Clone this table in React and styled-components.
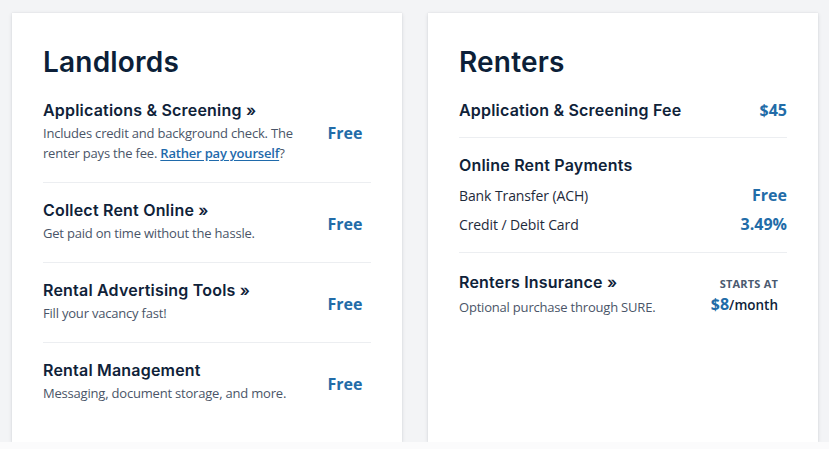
import React from "react";
import styled, { createGlobalStyle } from "styled-components";

const Global = createGlobalStyle`
  html, body { margin: 0; padding: 0; }
  body {
    background: #fbfbfc;
    font-family: "Open Sans", "Liberation Sans", sans-serif;
    -webkit-font-smoothing: antialiased;
  }
`;

const Page = styled.div`
  width: 829px;
  height: 442px;
  box-sizing: border-box;
  padding: 13px 10px 0 12px;
  display: flex;
  gap: 26px;
  align-items: stretch;
  background: #f3f4f6;
`;

const Card = styled.section`
  width: 390px;
  flex: none;
  box-sizing: border-box;
  background: #ffffff;
  padding: 31px 31px 19px 31px;
  box-shadow: 0 1px 4px rgba(20, 30, 50, 0.12), 0 0 1px rgba(20, 30, 50, 0.1);
`;

const Heading = styled.h2`
  margin: 0 0 19px 0;
  font-family: Inter, "Noto Sans", sans-serif;
  font-weight: 600;
  font-size: 28px;
  line-height: 36px;
  letter-spacing: 0.2px;
  color: #0c1f38;
`;

const Item = styled.div`
  display: flex;
  align-items: ${(p) => (p.$top ? "flex-start" : "center")};
  justify-content: space-between;
  padding: ${(p) => p.$pad || "16px 0 19px 0"};
  border-bottom: ${(p) => (p.$last ? "none" : "1px solid #eceef1")};
  &:first-of-type { padding-top: 0; }
`;

const ItemBody = styled.div`
  flex: 1;
  min-width: 0;
`;

const Title = styled.div`
  font-family: Inter, "Noto Sans", sans-serif;
  font-weight: 600;
  font-size: 16px;
  line-height: 22px;
  letter-spacing: 0.2px;
  color: #0f2239;
`;

const Desc = styled.div`
  margin-top: ${(p) => p.$mt || "2px"};
  font-size: 13px;
  line-height: 20px;
  letter-spacing: -0.2px;
  color: #4a5568;
  max-width: 260px;
`;

const Link = styled.a`
  color: #1f6aab;
  font-weight: 600;
  text-decoration: underline;
  text-underline-offset: 2px;
`;

const Price = styled.div`
  flex: none;
  width: ${(p) => p.$w || "auto"};
  text-align: ${(p) => p.$align || "right"};
  font-weight: 700;
  font-size: 16px;
  line-height: 22px;
  color: #226ca8;
  margin-top: ${(p) => p.$mt || "0"};
`;

const SubRow = styled.div`
  display: flex;
  justify-content: space-between;
  align-items: center;
  margin-top: ${(p) => p.$mt || "9px"};
  height: 20px;
`;

const SubLabel = styled.span`
  font-size: 14px;
  letter-spacing: -0.1px;
  color: #1e2a3b;
`;

const Starts = styled.div`
  flex: none;
  padding-right: 9px;
  padding-top: 6px;
  text-align: right;
`;

const StartsLabel = styled.div`
  font-size: 11px;
  font-weight: 700;
  letter-spacing: 0.2px;
  line-height: 14px;
  color: #4a5a70;
`;

const StartsPrice = styled.div`
  margin-top: 2px;
  line-height: 22px;
  color: #0f2239;
  font-size: 13.5px;
  font-weight: 600;
  b {
    font-size: 16px;
    font-weight: 700;
    color: #226ca8;
  }
`;

const landlords = [
  {
    title: "Applications & Screening »",
    desc: (
      <>
        Includes credit and background check. The renter pays the fee.{" "}
        <Link href="#">Rather pay yourself</Link>?
      </>
    ),
  },
  { title: "Collect Rent Online »", desc: "Get paid on time without the hassle." },
  { title: "Rental Advertising Tools »", desc: "Fill your vacancy fast!" },
  { title: "Rental Management", desc: "Messaging, document storage, and more." },
];

export default function App() {
  return (
    <>
      <Global />
      <Page>
        <Card>
          <Heading>Landlords</Heading>
          {landlords.map((it, i) => (
            <Item key={i} $last={i === landlords.length - 1}>
              <ItemBody>
                <Title>{it.title}</Title>
                <Desc>{it.desc}</Desc>
              </ItemBody>
              <Price $w="52px" $align="center" $mt={i === 0 ? "3px" : "6px"}>
                Free
              </Price>
            </Item>
          ))}
        </Card>
        <Card>
          <Heading>Renters</Heading>
          <Item $pad="16px 0 16px 0">
            <ItemBody>
              <Title>Application &amp; Screening Fee</Title>
            </ItemBody>
            <Price>$45</Price>
          </Item>
          <Item $pad="16px 0 18px 0">
            <ItemBody>
              <Title>Online Rent Payments</Title>
              <SubRow>
                <SubLabel>Bank Transfer (ACH)</SubLabel>
                <Price>Free</Price>
              </SubRow>
              <SubRow>
                <SubLabel>Credit / Debit Card</SubLabel>
                <Price>3.49%</Price>
              </SubRow>
            </ItemBody>
          </Item>
          <Item $last $top $pad="18px 0 0 0">
            <ItemBody>
              <Title>Renters Insurance »</Title>
              <Desc $mt="4px">Optional purchase through SURE.</Desc>
            </ItemBody>
            <Starts>
              <StartsLabel>STARTS AT</StartsLabel>
              <StartsPrice>
                <b>$8</b>/month
              </StartsPrice>
            </Starts>
          </Item>
        </Card>
      </Page>
    </>
  );
}
